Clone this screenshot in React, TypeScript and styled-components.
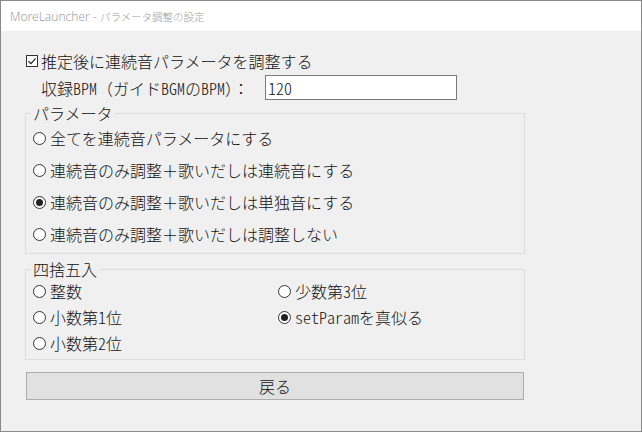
import React, { FC, useState } from 'react'
import styled, { createGlobalStyle } from 'styled-components'

const GlobalStyle = createGlobalStyle`
    html, body {
        margin: 0;
        padding: 0;
        background: #f0f0f0;
    }
    body {
        font-family: "Noto Sans CJK JP", "Noto Sans", sans-serif;
        font-weight: 300;
    }
`

const paramOptions = [
    '全てを連続音パラメータにする',
    '連続音のみ調整＋歌いだしは連続音にする',
    '連続音のみ調整＋歌いだしは単独音にする',
    '連続音のみ調整＋歌いだしは調整しない',
]

const App: FC = () => {
    const [adjust, setAdjust] = useState(true)
    const [param, setParam] = useState(2)
    const [rounding, setRounding] = useState('set')

    const roundingOptions = [
        { key: 'int', label: <>整数</> },
        { key: 'd1', label: <>小数第<Han>1</Han>位</> },
        { key: 'd2', label: <>小数第<Han>2</Han>位</> },
        { key: 'd3', label: <>少数第<Han>3</Han>位</> },
        { key: 'set', label: <><Han>setParam</Han>を真似る</> },
    ]

  return (
    <>
    <GlobalStyle />
    <Window>
        <TitleBar>MoreLauncher - <TitleJa>パラメータ調整の設定</TitleJa></TitleBar>
        <Body>
            <CheckRow onClick={() => setAdjust(!adjust)}>
                <CheckBox>
                    {adjust && (
                        <svg width="10" height="10" viewBox="0 0 10 10">
                            <path d="M1.5 5.2 L4 7.6 L8.6 2.4" fill="none" stroke="#222" strokeWidth="1.2" />
                        </svg>
                    )}
                </CheckBox>
                推定後に連続音パラメータを調整する
            </CheckRow>
            <BpmRow>
                <BpmLabel>収録<Han>BPM</Han>（ガイド<Han>BGM</Han>の<Han>BPM</Han>）：</BpmLabel>
                <BpmInput defaultValue="120" />
            </BpmRow>
            <Group>
                <Legend>パラメータ</Legend>
                {paramOptions.map((text, i) => (
                    <ParamItem key={i} onClick={() => setParam(i)}>
                        <Radio $checked={param === i} />
                        {text}
                    </ParamItem>
                ))}
            </Group>
            <Group $gap>
                <Legend>四捨五入</Legend>
                <RoundGrid>
                    {roundingOptions.map((opt) => (
                        <RoundItem key={opt.key} onClick={() => setRounding(opt.key)}>
                            <Radio $checked={rounding === opt.key} />
                            {opt.label}
                        </RoundItem>
                    ))}
                </RoundGrid>
            </Group>
            <BackButton>戻る</BackButton>
        </Body>
    </Window>
    </>
  )
}

export default App

const Han = styled.span`
    font-feature-settings: "hwid" 1;
`

const Window = styled.div`
    display: flex;
    flex-direction: column;
    width: 642px;
    height: 432px;
    box-sizing: border-box;
    border: 1px solid #8a8a8a;
    background: #f0f0f0;
    color: #111;
    font-size: 16px;
`

const TitleBar = styled.div`
    display: flex;
    align-items: center;
    height: 30px;
    padding-left: 9px;
    background: #ffffff;
    color: #a0a0a0;
    font-size: 12px;
    font-family: "Noto Sans", "Noto Sans CJK JP", sans-serif;
    white-space: pre;
`

const TitleJa = styled.span`
    font-family: "Noto Sans CJK JP", sans-serif;
    font-size: 10.5px;
`

const Body = styled.div`
    display: flex;
    flex-direction: column;
    flex: 1;
    padding: 20px 0 0 24px;
`

const CheckRow = styled.div`
    display: flex;
    align-items: center;
    height: 20px;
    line-height: 20px;
    padding-left: 1px;
    cursor: default;
`

const CheckBox = styled.span`
    display: flex;
    align-items: center;
    justify-content: center;
    width: 12px;
    height: 12px;
    box-sizing: border-box;
    border: 1px solid #333;
    background: #fff;
    margin-right: 3px;
`

const BpmRow = styled.div`
    display: flex;
    align-items: center;
    margin-top: 4px;
    height: 25px;
`

const BpmLabel = styled.span`
    width: 224px;
    margin-left: 16px;
    line-height: 20px;
    white-space: nowrap;
`

const BpmInput = styled.input`
    width: 192px;
    height: 25px;
    box-sizing: border-box;
    border: 1px solid #7a7a7a;
    background: #fff;
    padding: 0 2px;
    font-family: "Noto Sans CJK JP", sans-serif;
    font-weight: 300;
    font-size: 16px;
    font-feature-settings: "hwid" 1;
    color: #111;
    outline: none;
`

const Group = styled.fieldset<{ $gap?: boolean }>`
    width: 500px;
    box-sizing: border-box;
    margin: ${(props) => (props.$gap ? '6px' : '4px')} 0 0 0;
    padding: 0 0 3px 7px;
    border: 1px solid #dcdcdc;
    min-width: 0;
`

const Legend = styled.legend`
    padding: 0 2px;
    margin-left: -2px;
    line-height: 18px;
    height: 18px;
`

const ParamItem = styled.div`
    display: flex;
    align-items: center;
    height: 32px;
    line-height: 20px;
    white-space: nowrap;
    cursor: default;
`

const RoundGrid = styled.div`
    display: grid;
    grid-template-columns: 245px 1fr;
    grid-template-rows: repeat(3, 26px);
    grid-auto-flow: column;
`

const RoundItem = styled.div`
    display: flex;
    align-items: center;
    line-height: 20px;
    white-space: nowrap;
    cursor: default;
`

const Radio = styled.span<{ $checked: boolean }>`
    display: flex;
    align-items: center;
    justify-content: center;
    width: 13px;
    height: 13px;
    box-sizing: border-box;
    border: 1px solid #333;
    border-radius: 50%;
    background: #fff;
    margin-right: 4px;
    flex-shrink: 0;
    &::after {
        content: '';
        display: ${(props) => (props.$checked ? 'block' : 'none')};
        width: 7px;
        height: 7px;
        border-radius: 50%;
        background: #222;
    }
`

const BackButton = styled.button`
    width: 498px;
    height: 28px;
    margin: 12px 0 0 1px;
    box-sizing: border-box;
    border: 1px solid #adadad;
    background: #e1e1e1;
    font-family: "Noto Sans CJK JP", sans-serif;
    font-weight: 300;
    font-size: 16px;
    color: #111;
    padding: 0;
`
